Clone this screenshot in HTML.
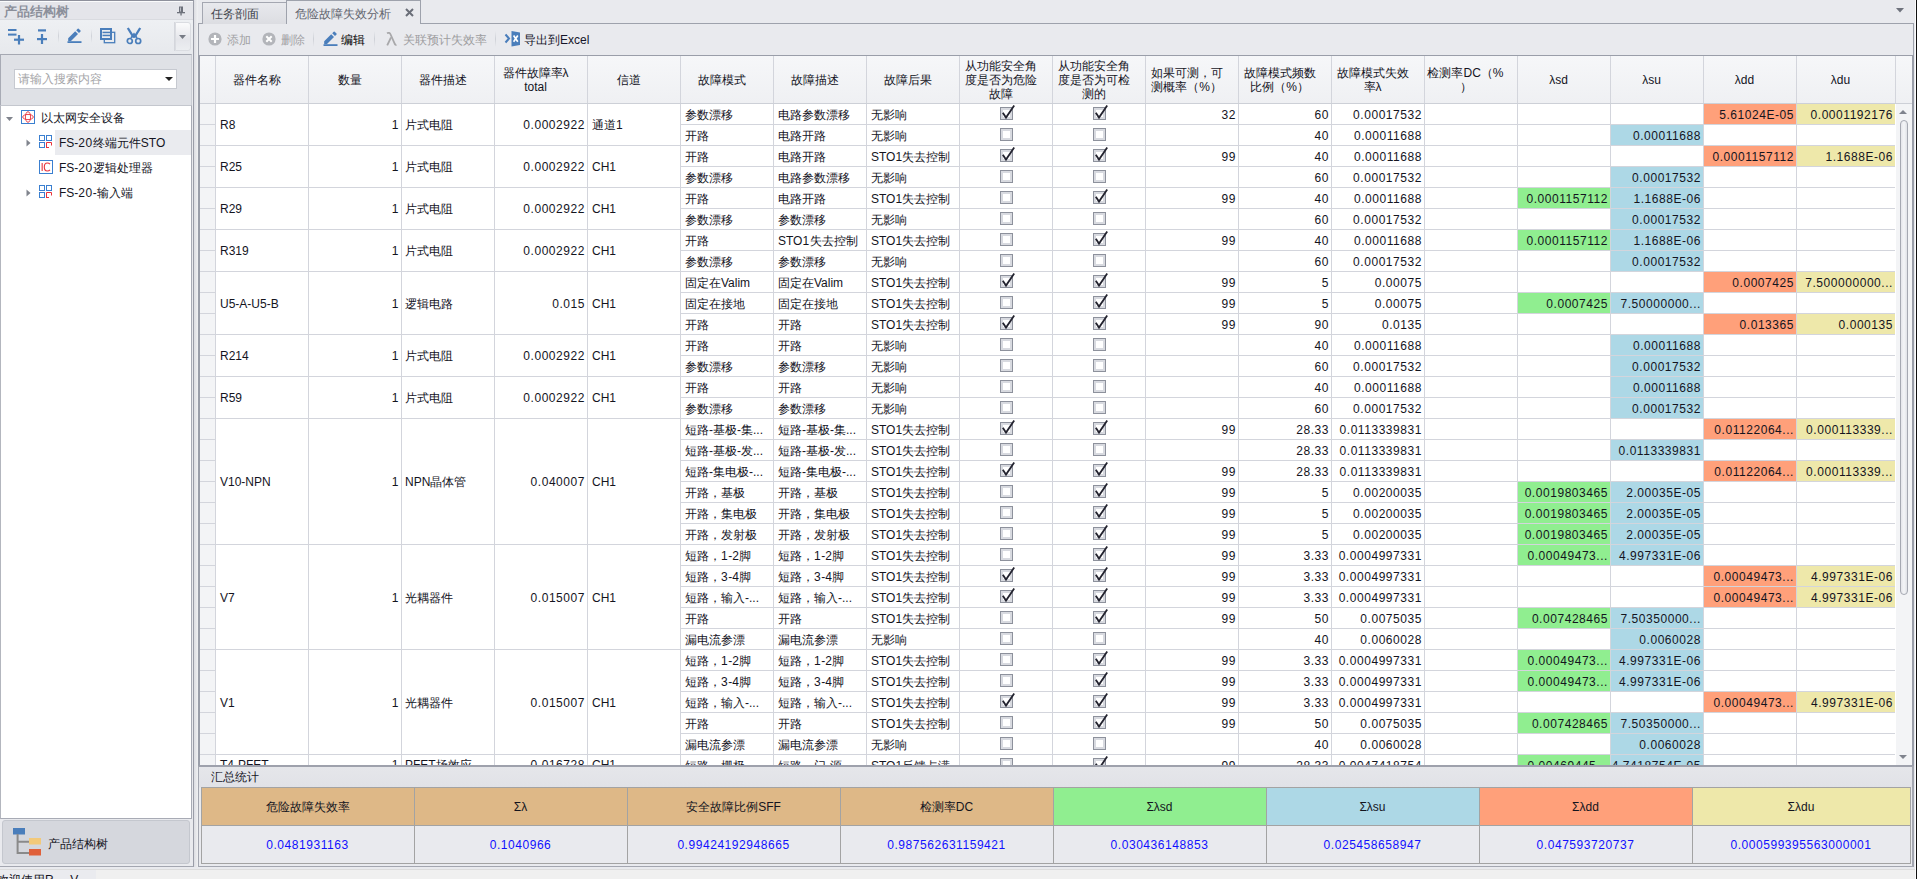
<!DOCTYPE html><html><head><meta charset="utf-8"><style>
*{box-sizing:border-box;margin:0;padding:0}
body{width:1917px;height:879px;overflow:hidden;position:relative;background:#e9eaee;font-family:"Liberation Sans",sans-serif;font-size:12px;color:#14141e}
.a{position:absolute}
.t{position:absolute;white-space:nowrap;line-height:14px}
.r{transform:translateX(-100%)}
.n{letter-spacing:0.55px}
.cb{position:absolute;width:13px;height:13px;border:1px solid #8d919c;background:#fff;box-shadow:inset 0 0 0 2px #d8dae0}
.ck{position:absolute;left:0;top:-3px;width:15px;height:15px}
</style></head><body>
<div class="a" style="left:0;top:0;width:194px;height:867px;background:#e9eaee;border-top:1px solid #8e919c;border-right:1px solid #9a9da8;border-bottom:1px solid #a3a6b0"></div>
<div class="a" style="left:0;top:1px;width:193px;height:1px;background:#fafbfc"></div>
<div class="a" style="left:0;top:2px;width:193px;height:17px;background:#e4e5ea"></div>
<div class="a" style="left:0;top:19px;width:193px;height:1px;background:#d9dbe0"></div>
<div class="a" style="left:0;top:20px;width:193px;height:34px;background:linear-gradient(#eef0f3,#e7e9ed)"></div>
<div class="t" style="left:4px;top:5px;font-size:12.5px;font-weight:bold;color:#8b8f9a">产品结构树</div>
<svg class="a" style="left:176px;top:6px" width="10" height="10" viewBox="0 0 10 10"><rect x="3" y="0.5" width="4" height="5.5" fill="#6d717b"/><rect x="4" y="1.5" width="1" height="4" fill="#b9bcc4"/><rect x="1" y="6" width="8" height="1.3" fill="#6d717b"/><rect x="4.4" y="7" width="1.3" height="2.5" fill="#6d717b"/></svg>
<svg class="a" style="left:7px;top:28px" width="18" height="17" viewBox="0 0 18 17"><rect x="1" y="1" width="8.5" height="2" fill="#4a7ebb"/><rect x="1" y="5.6" width="8.5" height="2" fill="#4a7ebb"/><rect x="7" y="10.6" width="10" height="2.2" fill="#4a7ebb"/><rect x="10.9" y="7" width="2.2" height="9.5" fill="#4a7ebb"/></svg>
<svg class="a" style="left:36px;top:28px" width="12" height="17" viewBox="0 0 12 17"><rect x="2" y="1.3" width="8" height="2.2" fill="#4a7ebb"/><rect x="1" y="10" width="10" height="2.2" fill="#4a7ebb"/><rect x="4.9" y="6" width="2.2" height="10" fill="#4a7ebb"/></svg>
<div class="a" style="left:58px;top:29px;width:1px;height:14px;background:linear-gradient(rgba(200,203,210,0),#cfd2d8,rgba(200,203,210,0))"></div>
<svg class="a" style="left:67px;top:28px" width="15" height="15" viewBox="0 0 15 15"><path d="M1.2 10.2 L8.2 3.2 L11 6 L4 13 L1.2 13 Z" fill="#4a7ebb"/><path d="M9.2 2.2 L10.7 0.7 Q11.2 0.2 11.7 0.7 L13.5 2.5 Q14 3 13.5 3.5 L12 5 Z" fill="#4a7ebb"/><rect x="0.5" y="13.2" width="14" height="1.8" fill="#4a7ebb"/></svg>
<div class="a" style="left:91px;top:29px;width:1px;height:14px;background:linear-gradient(rgba(200,203,210,0),#cfd2d8,rgba(200,203,210,0))"></div>
<svg class="a" style="left:100px;top:28px" width="16" height="16" viewBox="0 0 16 16"><rect x="4.3" y="4.3" width="10.4" height="10.4" fill="none" stroke="#4a7ebb" stroke-width="1.3"/><rect x="1" y="1" width="10" height="10" fill="#eceef1" stroke="#4a7ebb" stroke-width="2"/><rect x="2.5" y="3.7" width="7.5" height="1.5" fill="#4a7ebb"/><rect x="2.5" y="6.7" width="7.5" height="1.5" fill="#4a7ebb"/></svg>
<svg class="a" style="left:126px;top:27px" width="16" height="18" viewBox="0 0 16 18"><path d="M1.8 1 L7 9.3 Q8 10.6 9 9.3 L14.2 1" fill="none" stroke="#4a7ebb" stroke-width="2.3"/><path d="M5 11 L8 7 L11 11" fill="none" stroke="#4a7ebb" stroke-width="1.8"/><circle cx="3.8" cy="14" r="2.5" fill="none" stroke="#4a7ebb" stroke-width="1.7"/><circle cx="12.2" cy="14" r="2.5" fill="none" stroke="#4a7ebb" stroke-width="1.7"/></svg>
<div class="a" style="left:174px;top:22px;width:1px;height:29px;background:#d4d6dc"></div>
<div class="a" style="left:175px;top:22px;width:16px;height:29px;background:linear-gradient(#fbfbfc,#e4e5ea 60%,#eceef1);border:1px solid #dadce1;border-radius:0 3px 3px 0"></div>
<svg class="a" style="left:179px;top:35px" width="7" height="4" viewBox="0 0 7 4"><path d="M0 0 L7 0 L3.5 4 Z" fill="#777b85"/></svg>
<div class="a" style="left:0;top:54px;width:192px;height:51px;background:#dfe1e6;border-top:1px solid #a5a8b2;border-left:1px solid #a8abb5;border-right:1px solid #c9ccd3"></div>
<div class="a" style="left:14px;top:69px;width:163px;height:20px;background:#fff;border:1px solid #c6c9d0"></div>
<div class="t" style="left:18px;top:72px;color:#a5a5a8">请输入搜索内容</div>
<svg class="a" style="left:165px;top:77px" width="8" height="4" viewBox="0 0 8 4"><path d="M0 0 L8 0 L4 4 Z" fill="#222"/></svg>
<div class="a" style="left:0;top:105px;width:192px;height:714px;background:#fff;border-left:1px solid #b3b6be;border-right:1px solid #a8abb5;border-bottom:1px solid #a8abb5;border-top:1px solid #c4c7ce"></div>
<div class="a" style="left:55px;top:130px;width:136px;height:25px;background:#eaebef"></div>
<svg class="a" style="left:6px;top:117px" width="7" height="4" viewBox="0 0 7 4"><path d="M0 0 L7 0 L3.5 4 Z" fill="#80848d"/></svg>
<svg class="a" style="left:21px;top:110px" width="14" height="14" viewBox="0 0 14 14"><rect x="0.5" y="0.5" width="13" height="13" fill="#fff" stroke="#3a7fd0"/><ellipse cx="7" cy="7" rx="5.3" ry="2.6" fill="none" stroke="#e8323c" stroke-width="0.9"/><ellipse cx="7" cy="7" rx="2.6" ry="5.3" fill="none" stroke="#e8323c" stroke-width="0.9"/></svg>
<div class="t" style="left:41px;top:111px">以太网安全设备</div>
<svg class="a" style="left:26px;top:139px" width="5" height="8" viewBox="0 0 5 8"><path d="M0.5 0.5 L4.5 4 L0.5 7.5 Z" fill="#80848d"/></svg>
<svg class="a" style="left:39px;top:135px" width="13" height="13" viewBox="0 0 13 13"><rect x="0.5" y="0.5" width="5" height="5" fill="none" stroke="#3a7fd0"/><rect x="7.5" y="0.5" width="5" height="5" fill="none" stroke="#3a7fd0"/><rect x="0.5" y="7.5" width="5" height="5" fill="none" stroke="#3a7fd0"/><path d="M7.5 13 V7.5 H12.5 V10.5 M7.5 12.5 H10" fill="none" stroke="#e8323c"/></svg>
<div class="t" style="left:59px;top:136px">FS-<span class="n">20</span>终端元件STO</div>
<svg class="a" style="left:39px;top:160px" width="14" height="14" viewBox="0 0 14 14"><rect x="0.5" y="0.5" width="13" height="13" fill="#fff" stroke="#3a7fd0"/><rect x="2.6" y="3" width="1.1" height="8" fill="#e8323c"/><path d="M11 4.2 Q10 3 8.3 3 Q5.3 3 5.3 7 Q5.3 11 8.3 11 Q10 11 11 9.8" fill="none" stroke="#e8323c" stroke-width="1.1"/></svg>
<div class="t" style="left:59px;top:161px">FS-<span class="n">20</span>逻辑处理器</div>
<svg class="a" style="left:26px;top:189px" width="5" height="8" viewBox="0 0 5 8"><path d="M0.5 0.5 L4.5 4 L0.5 7.5 Z" fill="#80848d"/></svg>
<svg class="a" style="left:39px;top:185px" width="13" height="13" viewBox="0 0 13 13"><rect x="0.5" y="0.5" width="5" height="5" fill="none" stroke="#3a7fd0"/><rect x="7.5" y="0.5" width="5" height="5" fill="none" stroke="#3a7fd0"/><rect x="0.5" y="7.5" width="5" height="5" fill="none" stroke="#3a7fd0"/><path d="M7.5 13 V7.5 H12.5 V10.5 M7.5 12.5 H10" fill="none" stroke="#e8323c"/></svg>
<div class="t" style="left:59px;top:186px">FS-<span class="n">20</span>-输入端</div>
<div class="a" style="left:2px;top:820px;width:188px;height:44px;background:#d5d7dd;border:1px solid #c4c7ce;border-radius:3px"></div>
<svg class="a" style="left:13px;top:828px" width="29" height="28" viewBox="0 0 29 28"><rect x="0" y="0" width="12" height="6.5" fill="#4a7ebb"/><path d="M4.6 6 V25 H16 M4.6 13.8 H16" fill="none" stroke="#8a8a8a" stroke-width="2"/><rect x="16" y="10" width="12" height="6.5" fill="#f2c97a"/><rect x="16" y="21" width="12" height="6.5" fill="#e0603a"/></svg>
<div class="t" style="left:48px;top:837px">产品结构树</div>
<div class="a" style="left:0;top:869px;width:1917px;height:10px;background:#f0f0f0;border-top:1px solid #dcdcdc"></div>
<div class="a" style="left:0;top:870px;width:96px;height:9px;background:#eaebef"></div>
<div class="t" style="left:-3px;top:873px">欢迎使用R...&nbsp;&nbsp;V...</div>
<div class="a" style="left:1915px;top:0;width:1px;height:879px;background:#fbfbfc"></div>
<div class="a" style="left:1916px;top:0;width:1px;height:879px;background:#111"></div>
<div class="a" style="left:194px;top:0;width:4px;height:867px;background:linear-gradient(90deg,#dcdde2,#f0f1f3)"></div>
<div class="a" style="left:198px;top:23px;width:1716px;height:744px;background:#e9eaee;border:1px solid #9ea2ac"></div>
<div class="a" style="left:202px;top:2px;width:85px;height:22px;background:linear-gradient(#e8e9ed,#dcdde2);border:1px solid #a4a7b1;border-bottom:none"></div>
<div class="t" style="left:211px;top:7px;color:#40434c">任务剖面</div>
<div class="a" style="left:286px;top:0px;width:135px;height:24px;background:#e9eaee;border:1px solid #9ea2ac;border-bottom:none"></div>
<div class="t" style="left:295px;top:7px;color:#62656e">危险故障失效分析</div>
<svg class="a" style="left:405px;top:8px" width="9" height="9" viewBox="0 0 9 9"><path d="M1 1 L8 8 M8 1 L1 8" stroke="#6a6e78" stroke-width="2"/></svg>
<svg class="a" style="left:1896px;top:8px" width="8" height="5" viewBox="0 0 8 5"><path d="M0 0 L8 0 L4 4.5 Z" fill="#6e727c"/></svg>
<svg class="a" style="left:208px;top:32px" width="14" height="14" viewBox="0 0 14 14"><circle cx="7" cy="7" r="6.6" fill="#b3b5ba"/><path d="M7 3 V11 M3 7 H11" stroke="#fff" stroke-width="2.2"/></svg>
<div class="t" style="left:227px;top:33px;color:#a2a2a5">添加</div>
<svg class="a" style="left:262px;top:32px" width="14" height="14" viewBox="0 0 14 14"><circle cx="7" cy="7" r="6.6" fill="#b3b5ba"/><path d="M4.3 4.3 L9.7 9.7 M9.7 4.3 L4.3 9.7" stroke="#fff" stroke-width="2"/></svg>
<div class="t" style="left:281px;top:33px;color:#a2a2a5">删除</div>
<div class="a" style="left:313px;top:31px;width:1px;height:16px;background:linear-gradient(rgba(200,203,210,0),#cdd0d6,rgba(200,203,210,0))"></div>
<svg class="a" style="left:323px;top:31px" width="15" height="15" viewBox="0 0 15 15"><path d="M1.2 10.2 L8.2 3.2 L11 6 L4 13 L1.2 13 Z" fill="#4a7ebb"/><path d="M9.2 2.2 L10.7 0.7 Q11.2 0.2 11.7 0.7 L13.5 2.5 Q14 3 13.5 3.5 L12 5 Z" fill="#4a7ebb"/><rect x="0.5" y="13.2" width="14" height="1.8" fill="#4a7ebb"/></svg>
<div class="t" style="left:341px;top:33px;color:#000">编辑</div>
<div class="a" style="left:374px;top:31px;width:1px;height:16px;background:linear-gradient(rgba(200,203,210,0),#cdd0d6,rgba(200,203,210,0))"></div>
<svg class="a" style="left:386px;top:32px" width="11" height="14" viewBox="0 0 11 14"><path d="M1 1.3 Q3.5 0 4.6 2.5 L9 12.3 Q9.5 13.2 10.5 12.8" fill="none" stroke="#a8a8aa" stroke-width="1.8"/><path d="M5 5.5 L1.2 13.3" fill="none" stroke="#a8a8aa" stroke-width="1.8"/></svg>
<div class="t" style="left:403px;top:33px;color:#9d9da0">关联预计失效率</div>
<div class="a" style="left:495px;top:31px;width:1px;height:16px;background:linear-gradient(rgba(200,203,210,0),#cdd0d6,rgba(200,203,210,0))"></div>
<svg class="a" style="left:504px;top:31px" width="17" height="16" viewBox="0 0 17 16"><path d="M1.5 3.5 L5 7.5 L1.5 11.5" fill="none" stroke="#4a7ebb" stroke-width="2"/><path d="M7.5 0 L16 1.5 V14 L7.5 15.5 Z" fill="#4a7ebb"/><path d="M9.6 4.6 L13.8 10.8 M13.8 4.6 L9.6 10.8" stroke="#fff" stroke-width="1.7"/></svg>
<div class="t" style="left:524px;top:33px;color:#15152a">导出到Excel</div>
<div class="a" style="left:198px;top:55px;width:1716px;height:712px;background:#fff;overflow:hidden;border:1px solid #9a9ea9;border-left:2px solid #9a9ea9;border-right:2px solid #9a9ea9;border-bottom:2px solid #9ea1ac">
<div class="a" style="left:-1px;top:0px;width:1713px;height:47px;background:linear-gradient(#f6f7f9,#eff0f3)"></div>
<div class="a" style="left:-1px;top:48px;width:16px;height:661px;background:#f3f4f6"></div>
<div class="a" style="left:1504px;top:48px;width:92px;height:20px;background:#ffa07a"></div>
<div class="a" style="left:1597px;top:48px;width:98px;height:20px;background:#eee8aa"></div>
<div class="a" style="left:1411px;top:69px;width:92px;height:20px;background:#add8e6"></div>
<div class="a" style="left:1504px;top:90px;width:92px;height:20px;background:#ffa07a"></div>
<div class="a" style="left:1597px;top:90px;width:98px;height:20px;background:#eee8aa"></div>
<div class="a" style="left:1411px;top:111px;width:92px;height:20px;background:#add8e6"></div>
<div class="a" style="left:1318px;top:132px;width:92px;height:20px;background:#90ee90"></div>
<div class="a" style="left:1411px;top:132px;width:92px;height:20px;background:#add8e6"></div>
<div class="a" style="left:1411px;top:153px;width:92px;height:20px;background:#add8e6"></div>
<div class="a" style="left:1318px;top:174px;width:92px;height:20px;background:#90ee90"></div>
<div class="a" style="left:1411px;top:174px;width:92px;height:20px;background:#add8e6"></div>
<div class="a" style="left:1411px;top:195px;width:92px;height:20px;background:#add8e6"></div>
<div class="a" style="left:1504px;top:216px;width:92px;height:20px;background:#ffa07a"></div>
<div class="a" style="left:1597px;top:216px;width:98px;height:20px;background:#eee8aa"></div>
<div class="a" style="left:1318px;top:237px;width:92px;height:20px;background:#90ee90"></div>
<div class="a" style="left:1411px;top:237px;width:92px;height:20px;background:#add8e6"></div>
<div class="a" style="left:1504px;top:258px;width:92px;height:20px;background:#ffa07a"></div>
<div class="a" style="left:1597px;top:258px;width:98px;height:20px;background:#eee8aa"></div>
<div class="a" style="left:1411px;top:279px;width:92px;height:20px;background:#add8e6"></div>
<div class="a" style="left:1411px;top:300px;width:92px;height:20px;background:#add8e6"></div>
<div class="a" style="left:1411px;top:321px;width:92px;height:20px;background:#add8e6"></div>
<div class="a" style="left:1411px;top:342px;width:92px;height:20px;background:#add8e6"></div>
<div class="a" style="left:1504px;top:363px;width:92px;height:20px;background:#ffa07a"></div>
<div class="a" style="left:1597px;top:363px;width:98px;height:20px;background:#eee8aa"></div>
<div class="a" style="left:1411px;top:384px;width:92px;height:20px;background:#add8e6"></div>
<div class="a" style="left:1504px;top:405px;width:92px;height:20px;background:#ffa07a"></div>
<div class="a" style="left:1597px;top:405px;width:98px;height:20px;background:#eee8aa"></div>
<div class="a" style="left:1318px;top:426px;width:92px;height:20px;background:#90ee90"></div>
<div class="a" style="left:1411px;top:426px;width:92px;height:20px;background:#add8e6"></div>
<div class="a" style="left:1318px;top:447px;width:92px;height:20px;background:#90ee90"></div>
<div class="a" style="left:1411px;top:447px;width:92px;height:20px;background:#add8e6"></div>
<div class="a" style="left:1318px;top:468px;width:92px;height:20px;background:#90ee90"></div>
<div class="a" style="left:1411px;top:468px;width:92px;height:20px;background:#add8e6"></div>
<div class="a" style="left:1318px;top:489px;width:92px;height:20px;background:#90ee90"></div>
<div class="a" style="left:1411px;top:489px;width:92px;height:20px;background:#add8e6"></div>
<div class="a" style="left:1504px;top:510px;width:92px;height:20px;background:#ffa07a"></div>
<div class="a" style="left:1597px;top:510px;width:98px;height:20px;background:#eee8aa"></div>
<div class="a" style="left:1504px;top:531px;width:92px;height:20px;background:#ffa07a"></div>
<div class="a" style="left:1597px;top:531px;width:98px;height:20px;background:#eee8aa"></div>
<div class="a" style="left:1318px;top:552px;width:92px;height:20px;background:#90ee90"></div>
<div class="a" style="left:1411px;top:552px;width:92px;height:20px;background:#add8e6"></div>
<div class="a" style="left:1411px;top:573px;width:92px;height:20px;background:#add8e6"></div>
<div class="a" style="left:1318px;top:594px;width:92px;height:20px;background:#90ee90"></div>
<div class="a" style="left:1411px;top:594px;width:92px;height:20px;background:#add8e6"></div>
<div class="a" style="left:1318px;top:615px;width:92px;height:20px;background:#90ee90"></div>
<div class="a" style="left:1411px;top:615px;width:92px;height:20px;background:#add8e6"></div>
<div class="a" style="left:1504px;top:636px;width:92px;height:20px;background:#ffa07a"></div>
<div class="a" style="left:1597px;top:636px;width:98px;height:20px;background:#eee8aa"></div>
<div class="a" style="left:1318px;top:657px;width:92px;height:20px;background:#90ee90"></div>
<div class="a" style="left:1411px;top:657px;width:92px;height:20px;background:#add8e6"></div>
<div class="a" style="left:1411px;top:678px;width:92px;height:20px;background:#add8e6"></div>
<div class="a" style="left:1318px;top:699px;width:92px;height:20px;background:#90ee90"></div>
<div class="a" style="left:1411px;top:699px;width:92px;height:20px;background:#add8e6"></div>
<div class="a" style="left:15px;top:0px;width:1px;height:709px;background:#d3d5dc"></div>
<div class="a" style="left:108px;top:0px;width:1px;height:709px;background:#d3d5dc"></div>
<div class="a" style="left:201px;top:0px;width:1px;height:709px;background:#d3d5dc"></div>
<div class="a" style="left:294px;top:0px;width:1px;height:709px;background:#d3d5dc"></div>
<div class="a" style="left:387px;top:0px;width:1px;height:709px;background:#d3d5dc"></div>
<div class="a" style="left:480px;top:0px;width:1px;height:709px;background:#d3d5dc"></div>
<div class="a" style="left:573px;top:0px;width:1px;height:709px;background:#d3d5dc"></div>
<div class="a" style="left:666px;top:0px;width:1px;height:709px;background:#d3d5dc"></div>
<div class="a" style="left:759px;top:0px;width:1px;height:709px;background:#d3d5dc"></div>
<div class="a" style="left:852px;top:0px;width:1px;height:709px;background:#d3d5dc"></div>
<div class="a" style="left:945px;top:0px;width:1px;height:709px;background:#d3d5dc"></div>
<div class="a" style="left:1038px;top:0px;width:1px;height:709px;background:#d3d5dc"></div>
<div class="a" style="left:1131px;top:0px;width:1px;height:709px;background:#d3d5dc"></div>
<div class="a" style="left:1224px;top:0px;width:1px;height:709px;background:#d3d5dc"></div>
<div class="a" style="left:1317px;top:0px;width:1px;height:709px;background:#d3d5dc"></div>
<div class="a" style="left:1410px;top:0px;width:1px;height:709px;background:#d3d5dc"></div>
<div class="a" style="left:1503px;top:0px;width:1px;height:709px;background:#d3d5dc"></div>
<div class="a" style="left:1596px;top:0px;width:1px;height:709px;background:#d3d5dc"></div>
<div class="a" style="left:1695px;top:0px;width:1px;height:47px;background:#d3d5dc"></div>
<div class="a" style="left:-1px;top:47px;width:1713px;height:1px;background:#cdd0d7"></div>
<div class="a" style="left:-1px;top:68px;width:16px;height:1px;background:#d3d5dc"></div>
<div class="a" style="left:480px;top:68px;width:1215px;height:1px;background:#d3d5dc"></div>
<div class="a" style="left:-1px;top:89px;width:1696px;height:1px;background:#d3d5dc"></div>
<div class="a" style="left:-1px;top:110px;width:16px;height:1px;background:#d3d5dc"></div>
<div class="a" style="left:480px;top:110px;width:1215px;height:1px;background:#d3d5dc"></div>
<div class="a" style="left:-1px;top:131px;width:1696px;height:1px;background:#d3d5dc"></div>
<div class="a" style="left:-1px;top:152px;width:16px;height:1px;background:#d3d5dc"></div>
<div class="a" style="left:480px;top:152px;width:1215px;height:1px;background:#d3d5dc"></div>
<div class="a" style="left:-1px;top:173px;width:1696px;height:1px;background:#d3d5dc"></div>
<div class="a" style="left:-1px;top:194px;width:16px;height:1px;background:#d3d5dc"></div>
<div class="a" style="left:480px;top:194px;width:1215px;height:1px;background:#d3d5dc"></div>
<div class="a" style="left:-1px;top:215px;width:1696px;height:1px;background:#d3d5dc"></div>
<div class="a" style="left:-1px;top:236px;width:16px;height:1px;background:#d3d5dc"></div>
<div class="a" style="left:480px;top:236px;width:1215px;height:1px;background:#d3d5dc"></div>
<div class="a" style="left:-1px;top:257px;width:16px;height:1px;background:#d3d5dc"></div>
<div class="a" style="left:480px;top:257px;width:1215px;height:1px;background:#d3d5dc"></div>
<div class="a" style="left:-1px;top:278px;width:1696px;height:1px;background:#d3d5dc"></div>
<div class="a" style="left:-1px;top:299px;width:16px;height:1px;background:#d3d5dc"></div>
<div class="a" style="left:480px;top:299px;width:1215px;height:1px;background:#d3d5dc"></div>
<div class="a" style="left:-1px;top:320px;width:1696px;height:1px;background:#d3d5dc"></div>
<div class="a" style="left:-1px;top:341px;width:16px;height:1px;background:#d3d5dc"></div>
<div class="a" style="left:480px;top:341px;width:1215px;height:1px;background:#d3d5dc"></div>
<div class="a" style="left:-1px;top:362px;width:1696px;height:1px;background:#d3d5dc"></div>
<div class="a" style="left:-1px;top:383px;width:16px;height:1px;background:#d3d5dc"></div>
<div class="a" style="left:480px;top:383px;width:1215px;height:1px;background:#d3d5dc"></div>
<div class="a" style="left:-1px;top:404px;width:16px;height:1px;background:#d3d5dc"></div>
<div class="a" style="left:480px;top:404px;width:1215px;height:1px;background:#d3d5dc"></div>
<div class="a" style="left:-1px;top:425px;width:16px;height:1px;background:#d3d5dc"></div>
<div class="a" style="left:480px;top:425px;width:1215px;height:1px;background:#d3d5dc"></div>
<div class="a" style="left:-1px;top:446px;width:16px;height:1px;background:#d3d5dc"></div>
<div class="a" style="left:480px;top:446px;width:1215px;height:1px;background:#d3d5dc"></div>
<div class="a" style="left:-1px;top:467px;width:16px;height:1px;background:#d3d5dc"></div>
<div class="a" style="left:480px;top:467px;width:1215px;height:1px;background:#d3d5dc"></div>
<div class="a" style="left:-1px;top:488px;width:1696px;height:1px;background:#d3d5dc"></div>
<div class="a" style="left:-1px;top:509px;width:16px;height:1px;background:#d3d5dc"></div>
<div class="a" style="left:480px;top:509px;width:1215px;height:1px;background:#d3d5dc"></div>
<div class="a" style="left:-1px;top:530px;width:16px;height:1px;background:#d3d5dc"></div>
<div class="a" style="left:480px;top:530px;width:1215px;height:1px;background:#d3d5dc"></div>
<div class="a" style="left:-1px;top:551px;width:16px;height:1px;background:#d3d5dc"></div>
<div class="a" style="left:480px;top:551px;width:1215px;height:1px;background:#d3d5dc"></div>
<div class="a" style="left:-1px;top:572px;width:16px;height:1px;background:#d3d5dc"></div>
<div class="a" style="left:480px;top:572px;width:1215px;height:1px;background:#d3d5dc"></div>
<div class="a" style="left:-1px;top:593px;width:1696px;height:1px;background:#d3d5dc"></div>
<div class="a" style="left:-1px;top:614px;width:16px;height:1px;background:#d3d5dc"></div>
<div class="a" style="left:480px;top:614px;width:1215px;height:1px;background:#d3d5dc"></div>
<div class="a" style="left:-1px;top:635px;width:16px;height:1px;background:#d3d5dc"></div>
<div class="a" style="left:480px;top:635px;width:1215px;height:1px;background:#d3d5dc"></div>
<div class="a" style="left:-1px;top:656px;width:16px;height:1px;background:#d3d5dc"></div>
<div class="a" style="left:480px;top:656px;width:1215px;height:1px;background:#d3d5dc"></div>
<div class="a" style="left:-1px;top:677px;width:16px;height:1px;background:#d3d5dc"></div>
<div class="a" style="left:480px;top:677px;width:1215px;height:1px;background:#d3d5dc"></div>
<div class="a" style="left:-1px;top:698px;width:1696px;height:1px;background:#d3d5dc"></div>
<div class="a" style="left:-1px;top:719px;width:16px;height:1px;background:#d3d5dc"></div>
<div class="a" style="left:480px;top:719px;width:1215px;height:1px;background:#d3d5dc"></div>
<div class="a" style="left:-1px;top:740px;width:1696px;height:1px;background:#d3d5dc"></div>
<div class="t" style="left:20px;top:62.0px;">R8</div>
<div class="t r" style="left:199px;top:62.0px;"><span class="n">1</span></div>
<div class="t" style="left:205px;top:62.0px;">片式电阻</div>
<div class="t r" style="left:385px;top:62.0px;"><span class="n">0.0002922</span></div>
<div class="t" style="left:392px;top:62.0px;">通道1</div>
<div class="t" style="left:485px;top:51.5px;">参数漂移</div>
<div class="t" style="left:578px;top:51.5px;">电路参数漂移</div>
<div class="t" style="left:671px;top:51.5px;">无影响</div>
<div class="cb" style="left:800px;top:51px">
<svg class="ck" viewBox="0 0 15 15"><path d="M1.8 7.8 L5 12.6 L13.2 0.6" fill="none" stroke="#23232f" stroke-width="1.8" stroke-linejoin="miter"/></svg>
</div>
<div class="cb" style="left:893px;top:51px">
<svg class="ck" viewBox="0 0 15 15"><path d="M1.8 7.8 L5 12.6 L13.2 0.6" fill="none" stroke="#23232f" stroke-width="1.8" stroke-linejoin="miter"/></svg>
</div>
<div class="t r" style="left:1036px;top:51.5px;"><span class="n">32</span></div>
<div class="t r" style="left:1129px;top:51.5px;"><span class="n">60</span></div>
<div class="t r" style="left:1222px;top:51.5px;"><span class="n">0.00017532</span></div>
<div class="t r" style="left:1594px;top:51.5px;"><span class="n">5.61024E-05</span></div>
<div class="t r" style="left:1693px;top:51.5px;"><span class="n">0.0001192176</span></div>
<div class="t" style="left:485px;top:72.5px;">开路</div>
<div class="t" style="left:578px;top:72.5px;">电路开路</div>
<div class="t" style="left:671px;top:72.5px;">无影响</div>
<div class="cb" style="left:800px;top:72px">
</div>
<div class="cb" style="left:893px;top:72px">
</div>
<div class="t r" style="left:1129px;top:72.5px;"><span class="n">40</span></div>
<div class="t r" style="left:1222px;top:72.5px;"><span class="n">0.00011688</span></div>
<div class="t r" style="left:1501px;top:72.5px;"><span class="n">0.00011688</span></div>
<div class="t" style="left:20px;top:104.0px;">R25</div>
<div class="t r" style="left:199px;top:104.0px;"><span class="n">1</span></div>
<div class="t" style="left:205px;top:104.0px;">片式电阻</div>
<div class="t r" style="left:385px;top:104.0px;"><span class="n">0.0002922</span></div>
<div class="t" style="left:392px;top:104.0px;">CH1</div>
<div class="t" style="left:485px;top:93.5px;">开路</div>
<div class="t" style="left:578px;top:93.5px;">电路开路</div>
<div class="t" style="left:671px;top:93.5px;">STO1失去控制</div>
<div class="cb" style="left:800px;top:93px">
<svg class="ck" viewBox="0 0 15 15"><path d="M1.8 7.8 L5 12.6 L13.2 0.6" fill="none" stroke="#23232f" stroke-width="1.8" stroke-linejoin="miter"/></svg>
</div>
<div class="cb" style="left:893px;top:93px">
<svg class="ck" viewBox="0 0 15 15"><path d="M1.8 7.8 L5 12.6 L13.2 0.6" fill="none" stroke="#23232f" stroke-width="1.8" stroke-linejoin="miter"/></svg>
</div>
<div class="t r" style="left:1036px;top:93.5px;"><span class="n">99</span></div>
<div class="t r" style="left:1129px;top:93.5px;"><span class="n">40</span></div>
<div class="t r" style="left:1222px;top:93.5px;"><span class="n">0.00011688</span></div>
<div class="t r" style="left:1594px;top:93.5px;"><span class="n">0.0001157112</span></div>
<div class="t r" style="left:1693px;top:93.5px;"><span class="n">1.1688E-06</span></div>
<div class="t" style="left:485px;top:114.5px;">参数漂移</div>
<div class="t" style="left:578px;top:114.5px;">电路参数漂移</div>
<div class="t" style="left:671px;top:114.5px;">无影响</div>
<div class="cb" style="left:800px;top:114px">
</div>
<div class="cb" style="left:893px;top:114px">
</div>
<div class="t r" style="left:1129px;top:114.5px;"><span class="n">60</span></div>
<div class="t r" style="left:1222px;top:114.5px;"><span class="n">0.00017532</span></div>
<div class="t r" style="left:1501px;top:114.5px;"><span class="n">0.00017532</span></div>
<div class="t" style="left:20px;top:146.0px;">R29</div>
<div class="t r" style="left:199px;top:146.0px;"><span class="n">1</span></div>
<div class="t" style="left:205px;top:146.0px;">片式电阻</div>
<div class="t r" style="left:385px;top:146.0px;"><span class="n">0.0002922</span></div>
<div class="t" style="left:392px;top:146.0px;">CH1</div>
<div class="t" style="left:485px;top:135.5px;">开路</div>
<div class="t" style="left:578px;top:135.5px;">电路开路</div>
<div class="t" style="left:671px;top:135.5px;">STO1失去控制</div>
<div class="cb" style="left:800px;top:135px">
</div>
<div class="cb" style="left:893px;top:135px">
<svg class="ck" viewBox="0 0 15 15"><path d="M1.8 7.8 L5 12.6 L13.2 0.6" fill="none" stroke="#23232f" stroke-width="1.8" stroke-linejoin="miter"/></svg>
</div>
<div class="t r" style="left:1036px;top:135.5px;"><span class="n">99</span></div>
<div class="t r" style="left:1129px;top:135.5px;"><span class="n">40</span></div>
<div class="t r" style="left:1222px;top:135.5px;"><span class="n">0.00011688</span></div>
<div class="t r" style="left:1408px;top:135.5px;"><span class="n">0.0001157112</span></div>
<div class="t r" style="left:1501px;top:135.5px;"><span class="n">1.1688E-06</span></div>
<div class="t" style="left:485px;top:156.5px;">参数漂移</div>
<div class="t" style="left:578px;top:156.5px;">参数漂移</div>
<div class="t" style="left:671px;top:156.5px;">无影响</div>
<div class="cb" style="left:800px;top:156px">
</div>
<div class="cb" style="left:893px;top:156px">
</div>
<div class="t r" style="left:1129px;top:156.5px;"><span class="n">60</span></div>
<div class="t r" style="left:1222px;top:156.5px;"><span class="n">0.00017532</span></div>
<div class="t r" style="left:1501px;top:156.5px;"><span class="n">0.00017532</span></div>
<div class="t" style="left:20px;top:188.0px;">R319</div>
<div class="t r" style="left:199px;top:188.0px;"><span class="n">1</span></div>
<div class="t" style="left:205px;top:188.0px;">片式电阻</div>
<div class="t r" style="left:385px;top:188.0px;"><span class="n">0.0002922</span></div>
<div class="t" style="left:392px;top:188.0px;">CH1</div>
<div class="t" style="left:485px;top:177.5px;">开路</div>
<div class="t" style="left:578px;top:177.5px;">STO<span class="n">1</span>失去控制</div>
<div class="t" style="left:671px;top:177.5px;">STO1失去控制</div>
<div class="cb" style="left:800px;top:177px">
</div>
<div class="cb" style="left:893px;top:177px">
<svg class="ck" viewBox="0 0 15 15"><path d="M1.8 7.8 L5 12.6 L13.2 0.6" fill="none" stroke="#23232f" stroke-width="1.8" stroke-linejoin="miter"/></svg>
</div>
<div class="t r" style="left:1036px;top:177.5px;"><span class="n">99</span></div>
<div class="t r" style="left:1129px;top:177.5px;"><span class="n">40</span></div>
<div class="t r" style="left:1222px;top:177.5px;"><span class="n">0.00011688</span></div>
<div class="t r" style="left:1408px;top:177.5px;"><span class="n">0.0001157112</span></div>
<div class="t r" style="left:1501px;top:177.5px;"><span class="n">1.1688E-06</span></div>
<div class="t" style="left:485px;top:198.5px;">参数漂移</div>
<div class="t" style="left:578px;top:198.5px;">参数漂移</div>
<div class="t" style="left:671px;top:198.5px;">无影响</div>
<div class="cb" style="left:800px;top:198px">
</div>
<div class="cb" style="left:893px;top:198px">
</div>
<div class="t r" style="left:1129px;top:198.5px;"><span class="n">60</span></div>
<div class="t r" style="left:1222px;top:198.5px;"><span class="n">0.00017532</span></div>
<div class="t r" style="left:1501px;top:198.5px;"><span class="n">0.00017532</span></div>
<div class="t" style="left:20px;top:240.5px;">U5-A-U5-B</div>
<div class="t r" style="left:199px;top:240.5px;"><span class="n">1</span></div>
<div class="t" style="left:205px;top:240.5px;">逻辑电路</div>
<div class="t r" style="left:385px;top:240.5px;"><span class="n">0.015</span></div>
<div class="t" style="left:392px;top:240.5px;">CH1</div>
<div class="t" style="left:485px;top:219.5px;">固定在Valim</div>
<div class="t" style="left:578px;top:219.5px;">固定在Valim</div>
<div class="t" style="left:671px;top:219.5px;">STO1失去控制</div>
<div class="cb" style="left:800px;top:219px">
<svg class="ck" viewBox="0 0 15 15"><path d="M1.8 7.8 L5 12.6 L13.2 0.6" fill="none" stroke="#23232f" stroke-width="1.8" stroke-linejoin="miter"/></svg>
</div>
<div class="cb" style="left:893px;top:219px">
<svg class="ck" viewBox="0 0 15 15"><path d="M1.8 7.8 L5 12.6 L13.2 0.6" fill="none" stroke="#23232f" stroke-width="1.8" stroke-linejoin="miter"/></svg>
</div>
<div class="t r" style="left:1036px;top:219.5px;"><span class="n">99</span></div>
<div class="t r" style="left:1129px;top:219.5px;"><span class="n">5</span></div>
<div class="t r" style="left:1222px;top:219.5px;"><span class="n">0.00075</span></div>
<div class="t r" style="left:1594px;top:219.5px;"><span class="n">0.0007425</span></div>
<div class="t r" style="left:1693px;top:219.5px;"><span class="n">7.500000000...</span></div>
<div class="t" style="left:485px;top:240.5px;">固定在接地</div>
<div class="t" style="left:578px;top:240.5px;">固定在接地</div>
<div class="t" style="left:671px;top:240.5px;">STO1失去控制</div>
<div class="cb" style="left:800px;top:240px">
</div>
<div class="cb" style="left:893px;top:240px">
<svg class="ck" viewBox="0 0 15 15"><path d="M1.8 7.8 L5 12.6 L13.2 0.6" fill="none" stroke="#23232f" stroke-width="1.8" stroke-linejoin="miter"/></svg>
</div>
<div class="t r" style="left:1036px;top:240.5px;"><span class="n">99</span></div>
<div class="t r" style="left:1129px;top:240.5px;"><span class="n">5</span></div>
<div class="t r" style="left:1222px;top:240.5px;"><span class="n">0.00075</span></div>
<div class="t r" style="left:1408px;top:240.5px;"><span class="n">0.0007425</span></div>
<div class="t r" style="left:1501px;top:240.5px;"><span class="n">7.50000000...</span></div>
<div class="t" style="left:485px;top:261.5px;">开路</div>
<div class="t" style="left:578px;top:261.5px;">开路</div>
<div class="t" style="left:671px;top:261.5px;">STO1失去控制</div>
<div class="cb" style="left:800px;top:261px">
<svg class="ck" viewBox="0 0 15 15"><path d="M1.8 7.8 L5 12.6 L13.2 0.6" fill="none" stroke="#23232f" stroke-width="1.8" stroke-linejoin="miter"/></svg>
</div>
<div class="cb" style="left:893px;top:261px">
<svg class="ck" viewBox="0 0 15 15"><path d="M1.8 7.8 L5 12.6 L13.2 0.6" fill="none" stroke="#23232f" stroke-width="1.8" stroke-linejoin="miter"/></svg>
</div>
<div class="t r" style="left:1036px;top:261.5px;"><span class="n">99</span></div>
<div class="t r" style="left:1129px;top:261.5px;"><span class="n">90</span></div>
<div class="t r" style="left:1222px;top:261.5px;"><span class="n">0.0135</span></div>
<div class="t r" style="left:1594px;top:261.5px;"><span class="n">0.013365</span></div>
<div class="t r" style="left:1693px;top:261.5px;"><span class="n">0.000135</span></div>
<div class="t" style="left:20px;top:293.0px;">R214</div>
<div class="t r" style="left:199px;top:293.0px;"><span class="n">1</span></div>
<div class="t" style="left:205px;top:293.0px;">片式电阻</div>
<div class="t r" style="left:385px;top:293.0px;"><span class="n">0.0002922</span></div>
<div class="t" style="left:392px;top:293.0px;">CH1</div>
<div class="t" style="left:485px;top:282.5px;">开路</div>
<div class="t" style="left:578px;top:282.5px;">开路</div>
<div class="t" style="left:671px;top:282.5px;">无影响</div>
<div class="cb" style="left:800px;top:282px">
</div>
<div class="cb" style="left:893px;top:282px">
</div>
<div class="t r" style="left:1129px;top:282.5px;"><span class="n">40</span></div>
<div class="t r" style="left:1222px;top:282.5px;"><span class="n">0.00011688</span></div>
<div class="t r" style="left:1501px;top:282.5px;"><span class="n">0.00011688</span></div>
<div class="t" style="left:485px;top:303.5px;">参数漂移</div>
<div class="t" style="left:578px;top:303.5px;">参数漂移</div>
<div class="t" style="left:671px;top:303.5px;">无影响</div>
<div class="cb" style="left:800px;top:303px">
</div>
<div class="cb" style="left:893px;top:303px">
</div>
<div class="t r" style="left:1129px;top:303.5px;"><span class="n">60</span></div>
<div class="t r" style="left:1222px;top:303.5px;"><span class="n">0.00017532</span></div>
<div class="t r" style="left:1501px;top:303.5px;"><span class="n">0.00017532</span></div>
<div class="t" style="left:20px;top:335.0px;">R59</div>
<div class="t r" style="left:199px;top:335.0px;"><span class="n">1</span></div>
<div class="t" style="left:205px;top:335.0px;">片式电阻</div>
<div class="t r" style="left:385px;top:335.0px;"><span class="n">0.0002922</span></div>
<div class="t" style="left:392px;top:335.0px;">CH1</div>
<div class="t" style="left:485px;top:324.5px;">开路</div>
<div class="t" style="left:578px;top:324.5px;">开路</div>
<div class="t" style="left:671px;top:324.5px;">无影响</div>
<div class="cb" style="left:800px;top:324px">
</div>
<div class="cb" style="left:893px;top:324px">
</div>
<div class="t r" style="left:1129px;top:324.5px;"><span class="n">40</span></div>
<div class="t r" style="left:1222px;top:324.5px;"><span class="n">0.00011688</span></div>
<div class="t r" style="left:1501px;top:324.5px;"><span class="n">0.00011688</span></div>
<div class="t" style="left:485px;top:345.5px;">参数漂移</div>
<div class="t" style="left:578px;top:345.5px;">参数漂移</div>
<div class="t" style="left:671px;top:345.5px;">无影响</div>
<div class="cb" style="left:800px;top:345px">
</div>
<div class="cb" style="left:893px;top:345px">
</div>
<div class="t r" style="left:1129px;top:345.5px;"><span class="n">60</span></div>
<div class="t r" style="left:1222px;top:345.5px;"><span class="n">0.00017532</span></div>
<div class="t r" style="left:1501px;top:345.5px;"><span class="n">0.00017532</span></div>
<div class="t" style="left:20px;top:419.0px;">V10-NPN</div>
<div class="t r" style="left:199px;top:419.0px;"><span class="n">1</span></div>
<div class="t" style="left:205px;top:419.0px;">NPN晶体管</div>
<div class="t r" style="left:385px;top:419.0px;"><span class="n">0.040007</span></div>
<div class="t" style="left:392px;top:419.0px;">CH1</div>
<div class="t" style="left:485px;top:366.5px;">短路-基极-集...</div>
<div class="t" style="left:578px;top:366.5px;">短路-基极-集...</div>
<div class="t" style="left:671px;top:366.5px;">STO1失去控制</div>
<div class="cb" style="left:800px;top:366px">
<svg class="ck" viewBox="0 0 15 15"><path d="M1.8 7.8 L5 12.6 L13.2 0.6" fill="none" stroke="#23232f" stroke-width="1.8" stroke-linejoin="miter"/></svg>
</div>
<div class="cb" style="left:893px;top:366px">
<svg class="ck" viewBox="0 0 15 15"><path d="M1.8 7.8 L5 12.6 L13.2 0.6" fill="none" stroke="#23232f" stroke-width="1.8" stroke-linejoin="miter"/></svg>
</div>
<div class="t r" style="left:1036px;top:366.5px;"><span class="n">99</span></div>
<div class="t r" style="left:1129px;top:366.5px;"><span class="n">28.33</span></div>
<div class="t r" style="left:1222px;top:366.5px;"><span class="n">0.0113339831</span></div>
<div class="t r" style="left:1594px;top:366.5px;"><span class="n">0.01122064...</span></div>
<div class="t r" style="left:1693px;top:366.5px;"><span class="n">0.000113339...</span></div>
<div class="t" style="left:485px;top:387.5px;">短路-基极-发...</div>
<div class="t" style="left:578px;top:387.5px;">短路-基极-发...</div>
<div class="t" style="left:671px;top:387.5px;">STO1失去控制</div>
<div class="cb" style="left:800px;top:387px">
</div>
<div class="cb" style="left:893px;top:387px">
</div>
<div class="t r" style="left:1129px;top:387.5px;"><span class="n">28.33</span></div>
<div class="t r" style="left:1222px;top:387.5px;"><span class="n">0.0113339831</span></div>
<div class="t r" style="left:1501px;top:387.5px;"><span class="n">0.0113339831</span></div>
<div class="t" style="left:485px;top:408.5px;">短路-集电极-...</div>
<div class="t" style="left:578px;top:408.5px;">短路-集电极-...</div>
<div class="t" style="left:671px;top:408.5px;">STO1失去控制</div>
<div class="cb" style="left:800px;top:408px">
<svg class="ck" viewBox="0 0 15 15"><path d="M1.8 7.8 L5 12.6 L13.2 0.6" fill="none" stroke="#23232f" stroke-width="1.8" stroke-linejoin="miter"/></svg>
</div>
<div class="cb" style="left:893px;top:408px">
<svg class="ck" viewBox="0 0 15 15"><path d="M1.8 7.8 L5 12.6 L13.2 0.6" fill="none" stroke="#23232f" stroke-width="1.8" stroke-linejoin="miter"/></svg>
</div>
<div class="t r" style="left:1036px;top:408.5px;"><span class="n">99</span></div>
<div class="t r" style="left:1129px;top:408.5px;"><span class="n">28.33</span></div>
<div class="t r" style="left:1222px;top:408.5px;"><span class="n">0.0113339831</span></div>
<div class="t r" style="left:1594px;top:408.5px;"><span class="n">0.01122064...</span></div>
<div class="t r" style="left:1693px;top:408.5px;"><span class="n">0.000113339...</span></div>
<div class="t" style="left:485px;top:429.5px;">开路，基极</div>
<div class="t" style="left:578px;top:429.5px;">开路，基极</div>
<div class="t" style="left:671px;top:429.5px;">STO1失去控制</div>
<div class="cb" style="left:800px;top:429px">
</div>
<div class="cb" style="left:893px;top:429px">
<svg class="ck" viewBox="0 0 15 15"><path d="M1.8 7.8 L5 12.6 L13.2 0.6" fill="none" stroke="#23232f" stroke-width="1.8" stroke-linejoin="miter"/></svg>
</div>
<div class="t r" style="left:1036px;top:429.5px;"><span class="n">99</span></div>
<div class="t r" style="left:1129px;top:429.5px;"><span class="n">5</span></div>
<div class="t r" style="left:1222px;top:429.5px;"><span class="n">0.00200035</span></div>
<div class="t r" style="left:1408px;top:429.5px;"><span class="n">0.0019803465</span></div>
<div class="t r" style="left:1501px;top:429.5px;"><span class="n">2.00035E-05</span></div>
<div class="t" style="left:485px;top:450.5px;">开路，集电极</div>
<div class="t" style="left:578px;top:450.5px;">开路，集电极</div>
<div class="t" style="left:671px;top:450.5px;">STO1失去控制</div>
<div class="cb" style="left:800px;top:450px">
</div>
<div class="cb" style="left:893px;top:450px">
<svg class="ck" viewBox="0 0 15 15"><path d="M1.8 7.8 L5 12.6 L13.2 0.6" fill="none" stroke="#23232f" stroke-width="1.8" stroke-linejoin="miter"/></svg>
</div>
<div class="t r" style="left:1036px;top:450.5px;"><span class="n">99</span></div>
<div class="t r" style="left:1129px;top:450.5px;"><span class="n">5</span></div>
<div class="t r" style="left:1222px;top:450.5px;"><span class="n">0.00200035</span></div>
<div class="t r" style="left:1408px;top:450.5px;"><span class="n">0.0019803465</span></div>
<div class="t r" style="left:1501px;top:450.5px;"><span class="n">2.00035E-05</span></div>
<div class="t" style="left:485px;top:471.5px;">开路，发射极</div>
<div class="t" style="left:578px;top:471.5px;">开路，发射极</div>
<div class="t" style="left:671px;top:471.5px;">STO1失去控制</div>
<div class="cb" style="left:800px;top:471px">
</div>
<div class="cb" style="left:893px;top:471px">
<svg class="ck" viewBox="0 0 15 15"><path d="M1.8 7.8 L5 12.6 L13.2 0.6" fill="none" stroke="#23232f" stroke-width="1.8" stroke-linejoin="miter"/></svg>
</div>
<div class="t r" style="left:1036px;top:471.5px;"><span class="n">99</span></div>
<div class="t r" style="left:1129px;top:471.5px;"><span class="n">5</span></div>
<div class="t r" style="left:1222px;top:471.5px;"><span class="n">0.00200035</span></div>
<div class="t r" style="left:1408px;top:471.5px;"><span class="n">0.0019803465</span></div>
<div class="t r" style="left:1501px;top:471.5px;"><span class="n">2.00035E-05</span></div>
<div class="t" style="left:20px;top:534.5px;">V7</div>
<div class="t r" style="left:199px;top:534.5px;"><span class="n">1</span></div>
<div class="t" style="left:205px;top:534.5px;">光耦器件</div>
<div class="t r" style="left:385px;top:534.5px;"><span class="n">0.015007</span></div>
<div class="t" style="left:392px;top:534.5px;">CH1</div>
<div class="t" style="left:485px;top:492.5px;">短路，<span class="n">1</span>-<span class="n">2</span>脚</div>
<div class="t" style="left:578px;top:492.5px;">短路，<span class="n">1</span>-<span class="n">2</span>脚</div>
<div class="t" style="left:671px;top:492.5px;">STO1失去控制</div>
<div class="cb" style="left:800px;top:492px">
</div>
<div class="cb" style="left:893px;top:492px">
<svg class="ck" viewBox="0 0 15 15"><path d="M1.8 7.8 L5 12.6 L13.2 0.6" fill="none" stroke="#23232f" stroke-width="1.8" stroke-linejoin="miter"/></svg>
</div>
<div class="t r" style="left:1036px;top:492.5px;"><span class="n">99</span></div>
<div class="t r" style="left:1129px;top:492.5px;"><span class="n">3.33</span></div>
<div class="t r" style="left:1222px;top:492.5px;"><span class="n">0.0004997331</span></div>
<div class="t r" style="left:1408px;top:492.5px;"><span class="n">0.00049473...</span></div>
<div class="t r" style="left:1501px;top:492.5px;"><span class="n">4.997331E-06</span></div>
<div class="t" style="left:485px;top:513.5px;">短路，<span class="n">3</span>-<span class="n">4</span>脚</div>
<div class="t" style="left:578px;top:513.5px;">短路，<span class="n">3</span>-<span class="n">4</span>脚</div>
<div class="t" style="left:671px;top:513.5px;">STO1失去控制</div>
<div class="cb" style="left:800px;top:513px">
<svg class="ck" viewBox="0 0 15 15"><path d="M1.8 7.8 L5 12.6 L13.2 0.6" fill="none" stroke="#23232f" stroke-width="1.8" stroke-linejoin="miter"/></svg>
</div>
<div class="cb" style="left:893px;top:513px">
<svg class="ck" viewBox="0 0 15 15"><path d="M1.8 7.8 L5 12.6 L13.2 0.6" fill="none" stroke="#23232f" stroke-width="1.8" stroke-linejoin="miter"/></svg>
</div>
<div class="t r" style="left:1036px;top:513.5px;"><span class="n">99</span></div>
<div class="t r" style="left:1129px;top:513.5px;"><span class="n">3.33</span></div>
<div class="t r" style="left:1222px;top:513.5px;"><span class="n">0.0004997331</span></div>
<div class="t r" style="left:1594px;top:513.5px;"><span class="n">0.00049473...</span></div>
<div class="t r" style="left:1693px;top:513.5px;"><span class="n">4.997331E-06</span></div>
<div class="t" style="left:485px;top:534.5px;">短路，输入-...</div>
<div class="t" style="left:578px;top:534.5px;">短路，输入-...</div>
<div class="t" style="left:671px;top:534.5px;">STO1失去控制</div>
<div class="cb" style="left:800px;top:534px">
<svg class="ck" viewBox="0 0 15 15"><path d="M1.8 7.8 L5 12.6 L13.2 0.6" fill="none" stroke="#23232f" stroke-width="1.8" stroke-linejoin="miter"/></svg>
</div>
<div class="cb" style="left:893px;top:534px">
<svg class="ck" viewBox="0 0 15 15"><path d="M1.8 7.8 L5 12.6 L13.2 0.6" fill="none" stroke="#23232f" stroke-width="1.8" stroke-linejoin="miter"/></svg>
</div>
<div class="t r" style="left:1036px;top:534.5px;"><span class="n">99</span></div>
<div class="t r" style="left:1129px;top:534.5px;"><span class="n">3.33</span></div>
<div class="t r" style="left:1222px;top:534.5px;"><span class="n">0.0004997331</span></div>
<div class="t r" style="left:1594px;top:534.5px;"><span class="n">0.00049473...</span></div>
<div class="t r" style="left:1693px;top:534.5px;"><span class="n">4.997331E-06</span></div>
<div class="t" style="left:485px;top:555.5px;">开路</div>
<div class="t" style="left:578px;top:555.5px;">开路</div>
<div class="t" style="left:671px;top:555.5px;">STO1失去控制</div>
<div class="cb" style="left:800px;top:555px">
</div>
<div class="cb" style="left:893px;top:555px">
<svg class="ck" viewBox="0 0 15 15"><path d="M1.8 7.8 L5 12.6 L13.2 0.6" fill="none" stroke="#23232f" stroke-width="1.8" stroke-linejoin="miter"/></svg>
</div>
<div class="t r" style="left:1036px;top:555.5px;"><span class="n">99</span></div>
<div class="t r" style="left:1129px;top:555.5px;"><span class="n">50</span></div>
<div class="t r" style="left:1222px;top:555.5px;"><span class="n">0.0075035</span></div>
<div class="t r" style="left:1408px;top:555.5px;"><span class="n">0.007428465</span></div>
<div class="t r" style="left:1501px;top:555.5px;"><span class="n">7.50350000...</span></div>
<div class="t" style="left:485px;top:576.5px;">漏电流参漂</div>
<div class="t" style="left:578px;top:576.5px;">漏电流参漂</div>
<div class="t" style="left:671px;top:576.5px;">无影响</div>
<div class="cb" style="left:800px;top:576px">
</div>
<div class="cb" style="left:893px;top:576px">
</div>
<div class="t r" style="left:1129px;top:576.5px;"><span class="n">40</span></div>
<div class="t r" style="left:1222px;top:576.5px;"><span class="n">0.0060028</span></div>
<div class="t r" style="left:1501px;top:576.5px;"><span class="n">0.0060028</span></div>
<div class="t" style="left:20px;top:639.5px;">V1</div>
<div class="t r" style="left:199px;top:639.5px;"><span class="n">1</span></div>
<div class="t" style="left:205px;top:639.5px;">光耦器件</div>
<div class="t r" style="left:385px;top:639.5px;"><span class="n">0.015007</span></div>
<div class="t" style="left:392px;top:639.5px;">CH1</div>
<div class="t" style="left:485px;top:597.5px;">短路，<span class="n">1</span>-<span class="n">2</span>脚</div>
<div class="t" style="left:578px;top:597.5px;">短路，<span class="n">1</span>-<span class="n">2</span>脚</div>
<div class="t" style="left:671px;top:597.5px;">STO1失去控制</div>
<div class="cb" style="left:800px;top:597px">
</div>
<div class="cb" style="left:893px;top:597px">
<svg class="ck" viewBox="0 0 15 15"><path d="M1.8 7.8 L5 12.6 L13.2 0.6" fill="none" stroke="#23232f" stroke-width="1.8" stroke-linejoin="miter"/></svg>
</div>
<div class="t r" style="left:1036px;top:597.5px;"><span class="n">99</span></div>
<div class="t r" style="left:1129px;top:597.5px;"><span class="n">3.33</span></div>
<div class="t r" style="left:1222px;top:597.5px;"><span class="n">0.0004997331</span></div>
<div class="t r" style="left:1408px;top:597.5px;"><span class="n">0.00049473...</span></div>
<div class="t r" style="left:1501px;top:597.5px;"><span class="n">4.997331E-06</span></div>
<div class="t" style="left:485px;top:618.5px;">短路，<span class="n">3</span>-<span class="n">4</span>脚</div>
<div class="t" style="left:578px;top:618.5px;">短路，<span class="n">3</span>-<span class="n">4</span>脚</div>
<div class="t" style="left:671px;top:618.5px;">STO1失去控制</div>
<div class="cb" style="left:800px;top:618px">
</div>
<div class="cb" style="left:893px;top:618px">
<svg class="ck" viewBox="0 0 15 15"><path d="M1.8 7.8 L5 12.6 L13.2 0.6" fill="none" stroke="#23232f" stroke-width="1.8" stroke-linejoin="miter"/></svg>
</div>
<div class="t r" style="left:1036px;top:618.5px;"><span class="n">99</span></div>
<div class="t r" style="left:1129px;top:618.5px;"><span class="n">3.33</span></div>
<div class="t r" style="left:1222px;top:618.5px;"><span class="n">0.0004997331</span></div>
<div class="t r" style="left:1408px;top:618.5px;"><span class="n">0.00049473...</span></div>
<div class="t r" style="left:1501px;top:618.5px;"><span class="n">4.997331E-06</span></div>
<div class="t" style="left:485px;top:639.5px;">短路，输入-...</div>
<div class="t" style="left:578px;top:639.5px;">短路，输入-...</div>
<div class="t" style="left:671px;top:639.5px;">STO1失去控制</div>
<div class="cb" style="left:800px;top:639px">
<svg class="ck" viewBox="0 0 15 15"><path d="M1.8 7.8 L5 12.6 L13.2 0.6" fill="none" stroke="#23232f" stroke-width="1.8" stroke-linejoin="miter"/></svg>
</div>
<div class="cb" style="left:893px;top:639px">
<svg class="ck" viewBox="0 0 15 15"><path d="M1.8 7.8 L5 12.6 L13.2 0.6" fill="none" stroke="#23232f" stroke-width="1.8" stroke-linejoin="miter"/></svg>
</div>
<div class="t r" style="left:1036px;top:639.5px;"><span class="n">99</span></div>
<div class="t r" style="left:1129px;top:639.5px;"><span class="n">3.33</span></div>
<div class="t r" style="left:1222px;top:639.5px;"><span class="n">0.0004997331</span></div>
<div class="t r" style="left:1594px;top:639.5px;"><span class="n">0.00049473...</span></div>
<div class="t r" style="left:1693px;top:639.5px;"><span class="n">4.997331E-06</span></div>
<div class="t" style="left:485px;top:660.5px;">开路</div>
<div class="t" style="left:578px;top:660.5px;">开路</div>
<div class="t" style="left:671px;top:660.5px;">STO1失去控制</div>
<div class="cb" style="left:800px;top:660px">
</div>
<div class="cb" style="left:893px;top:660px">
<svg class="ck" viewBox="0 0 15 15"><path d="M1.8 7.8 L5 12.6 L13.2 0.6" fill="none" stroke="#23232f" stroke-width="1.8" stroke-linejoin="miter"/></svg>
</div>
<div class="t r" style="left:1036px;top:660.5px;"><span class="n">99</span></div>
<div class="t r" style="left:1129px;top:660.5px;"><span class="n">50</span></div>
<div class="t r" style="left:1222px;top:660.5px;"><span class="n">0.0075035</span></div>
<div class="t r" style="left:1408px;top:660.5px;"><span class="n">0.007428465</span></div>
<div class="t r" style="left:1501px;top:660.5px;"><span class="n">7.50350000...</span></div>
<div class="t" style="left:485px;top:681.5px;">漏电流参漂</div>
<div class="t" style="left:578px;top:681.5px;">漏电流参漂</div>
<div class="t" style="left:671px;top:681.5px;">无影响</div>
<div class="cb" style="left:800px;top:681px">
</div>
<div class="cb" style="left:893px;top:681px">
</div>
<div class="t r" style="left:1129px;top:681.5px;"><span class="n">40</span></div>
<div class="t r" style="left:1222px;top:681.5px;"><span class="n">0.0060028</span></div>
<div class="t r" style="left:1501px;top:681.5px;"><span class="n">0.0060028</span></div>
<div class="t" style="left:20px;top:702px;">T4-PFET</div>
<div class="t r" style="left:199px;top:702px;"><span class="n">1</span></div>
<div class="t" style="left:205px;top:702px;">PFET场效应</div>
<div class="t r" style="left:385px;top:702px;"><span class="n">0.016728</span></div>
<div class="t" style="left:392px;top:702px;">CH1</div>
<div class="t" style="left:485px;top:702.5px;">短路，栅极...</div>
<div class="t" style="left:578px;top:702.5px;">短路，门-源...</div>
<div class="t" style="left:671px;top:702.5px;">STO1反馈占满</div>
<div class="cb" style="left:800px;top:702px">
</div>
<div class="cb" style="left:893px;top:702px">
<svg class="ck" viewBox="0 0 15 15"><path d="M1.8 7.8 L5 12.6 L13.2 0.6" fill="none" stroke="#23232f" stroke-width="1.8" stroke-linejoin="miter"/></svg>
</div>
<div class="t r" style="left:1036px;top:702.5px;"><span class="n">99</span></div>
<div class="t r" style="left:1129px;top:702.5px;"><span class="n">28.33</span></div>
<div class="t r" style="left:1222px;top:702.5px;"><span class="n">0.0047418754</span></div>
<div class="t r" style="left:1408px;top:702.5px;"><span class="n">0.00469445...</span></div>
<div class="t r" style="left:1501px;top:702.5px;"><span class="n">4.7418754E-05</span></div>
<div class="a" style="left:15px;top:17.0px;width:83px;text-align:center;line-height:14px;white-space:nowrap">器件名称</div>
<div class="a" style="left:108px;top:17.0px;width:83px;text-align:center;line-height:14px;white-space:nowrap">数量</div>
<div class="a" style="left:201px;top:17.0px;width:83px;text-align:center;line-height:14px;white-space:nowrap">器件描述</div>
<div class="a" style="left:294px;top:10.0px;width:83px;text-align:center;line-height:14px;white-space:nowrap">器件故障率λ<br>total</div>
<div class="a" style="left:387px;top:17.0px;width:83px;text-align:center;line-height:14px;white-space:nowrap">信道</div>
<div class="a" style="left:480px;top:17.0px;width:83px;text-align:center;line-height:14px;white-space:nowrap">故障模式</div>
<div class="a" style="left:573px;top:17.0px;width:83px;text-align:center;line-height:14px;white-space:nowrap">故障描述</div>
<div class="a" style="left:666px;top:17.0px;width:83px;text-align:center;line-height:14px;white-space:nowrap">故障后果</div>
<div class="a" style="left:759px;top:3.0px;width:83px;text-align:center;line-height:14px;white-space:nowrap">从功能安全角<br>度是否为危险<br>故障</div>
<div class="a" style="left:852px;top:3.0px;width:83px;text-align:center;line-height:14px;white-space:nowrap">从功能安全角<br>度是否为可检<br>测的</div>
<div class="a" style="left:945px;top:10.0px;width:83px;text-align:center;line-height:14px;white-space:nowrap">如果可测，可<br>测概率（%）</div>
<div class="a" style="left:1038px;top:10.0px;width:83px;text-align:center;line-height:14px;white-space:nowrap">故障模式频数<br>比例（%）</div>
<div class="a" style="left:1131px;top:10.0px;width:83px;text-align:center;line-height:14px;white-space:nowrap">故障模式失效<br>率λ</div>
<div class="a" style="left:1224px;top:10.0px;width:83px;text-align:center;line-height:14px;white-space:nowrap">检测率DC（%<br>）</div>
<div class="a" style="left:1317px;top:17.0px;width:83px;text-align:center;line-height:14px;white-space:nowrap">λsd</div>
<div class="a" style="left:1410px;top:17.0px;width:83px;text-align:center;line-height:14px;white-space:nowrap">λsu</div>
<div class="a" style="left:1503px;top:17.0px;width:83px;text-align:center;line-height:14px;white-space:nowrap">λdd</div>
<div class="a" style="left:1596px;top:17.0px;width:89px;text-align:center;line-height:14px;white-space:nowrap">λdu</div>
<div class="a" style="left:1696px;top:48px;width:16px;height:661px;background:#f3f4f6"></div>
<svg class="a" style="left:1699px;top:54px" width="8" height="4" viewBox="0 0 8 4"><path d="M0 4 L8 4 L4 0 Z" fill="#80848e"/></svg>
<svg class="a" style="left:1699px;top:699px" width="8" height="4" viewBox="0 0 8 4"><path d="M0 0 L8 0 L4 4 Z" fill="#80848e"/></svg>
<div class="a" style="left:1700px;top:64px;width:8px;height:475px;background:linear-gradient(90deg,#e4e5ea,#f4f5f7 50%,#e0e2e7);border:1px solid #a6a9b2;border-radius:4px"></div>
</div>
<div class="a" style="left:198px;top:766px;width:1716px;height:101px;border:1px solid #a3a6b0;border-top:none;border-right:2px solid #a3a6b0"></div>
<div class="a" style="left:199px;top:767px;width:1713px;height:99px;background:linear-gradient(#e5e6ea,#e1e2e7 20px,#e9eaee 21px)"></div>
<div class="t" style="left:211px;top:770px">汇总统计</div>
<div class="a" style="left:201px;top:787px;width:1710px;height:77px;background:#e9eaee;border:1px solid #a3a3a3"></div>
<div class="a" style="left:202px;top:788px;width:212px;height:37px;background:#deb887"></div>
<div class="a" style="left:201px;top:799.5px;width:213px;text-align:center;line-height:14px;white-space:nowrap">危险故障失效率</div>
<div class="a" style="left:201px;top:838px;width:213px;text-align:center;line-height:14px;white-space:nowrap;color:#1010ff"><span class="n">0.0481931163</span></div>
<div class="a" style="left:415px;top:788px;width:212px;height:37px;background:#deb887"></div>
<div class="a" style="left:414px;top:788px;width:1px;height:75px;background:#a3a3a3"></div>
<div class="a" style="left:414px;top:799.5px;width:213px;text-align:center;line-height:14px;white-space:nowrap">Σλ</div>
<div class="a" style="left:414px;top:838px;width:213px;text-align:center;line-height:14px;white-space:nowrap;color:#1010ff"><span class="n">0.1040966</span></div>
<div class="a" style="left:628px;top:788px;width:212px;height:37px;background:#deb887"></div>
<div class="a" style="left:627px;top:788px;width:1px;height:75px;background:#a3a3a3"></div>
<div class="a" style="left:627px;top:799.5px;width:213px;text-align:center;line-height:14px;white-space:nowrap">安全故障比例SFF</div>
<div class="a" style="left:627px;top:838px;width:213px;text-align:center;line-height:14px;white-space:nowrap;color:#1010ff"><span class="n">0.99424192948665</span></div>
<div class="a" style="left:841px;top:788px;width:212px;height:37px;background:#deb887"></div>
<div class="a" style="left:840px;top:788px;width:1px;height:75px;background:#a3a3a3"></div>
<div class="a" style="left:840px;top:799.5px;width:213px;text-align:center;line-height:14px;white-space:nowrap">检测率DC</div>
<div class="a" style="left:840px;top:838px;width:213px;text-align:center;line-height:14px;white-space:nowrap;color:#1010ff"><span class="n">0.987562631159421</span></div>
<div class="a" style="left:1054px;top:788px;width:212px;height:37px;background:#90ee90"></div>
<div class="a" style="left:1053px;top:788px;width:1px;height:75px;background:#a3a3a3"></div>
<div class="a" style="left:1053px;top:799.5px;width:213px;text-align:center;line-height:14px;white-space:nowrap">Σλsd</div>
<div class="a" style="left:1053px;top:838px;width:213px;text-align:center;line-height:14px;white-space:nowrap;color:#1010ff"><span class="n">0.030436148853</span></div>
<div class="a" style="left:1267px;top:788px;width:212px;height:37px;background:#add8e6"></div>
<div class="a" style="left:1266px;top:788px;width:1px;height:75px;background:#a3a3a3"></div>
<div class="a" style="left:1266px;top:799.5px;width:213px;text-align:center;line-height:14px;white-space:nowrap">Σλsu</div>
<div class="a" style="left:1266px;top:838px;width:213px;text-align:center;line-height:14px;white-space:nowrap;color:#1010ff"><span class="n">0.025458658947</span></div>
<div class="a" style="left:1480px;top:788px;width:212px;height:37px;background:#ffa07a"></div>
<div class="a" style="left:1479px;top:788px;width:1px;height:75px;background:#a3a3a3"></div>
<div class="a" style="left:1479px;top:799.5px;width:213px;text-align:center;line-height:14px;white-space:nowrap">Σλdd</div>
<div class="a" style="left:1479px;top:838px;width:213px;text-align:center;line-height:14px;white-space:nowrap;color:#1010ff"><span class="n">0.047593720737</span></div>
<div class="a" style="left:1693px;top:788px;width:217px;height:37px;background:#eee8aa"></div>
<div class="a" style="left:1692px;top:788px;width:1px;height:75px;background:#a3a3a3"></div>
<div class="a" style="left:1692px;top:799.5px;width:218px;text-align:center;line-height:14px;white-space:nowrap">Σλdu</div>
<div class="a" style="left:1692px;top:838px;width:218px;text-align:center;line-height:14px;white-space:nowrap;color:#1010ff"><span class="n">0.000599395563000001</span></div>
<div class="a" style="left:201px;top:825px;width:1710px;height:1px;background:#a3a3a3"></div>
</body></html>
